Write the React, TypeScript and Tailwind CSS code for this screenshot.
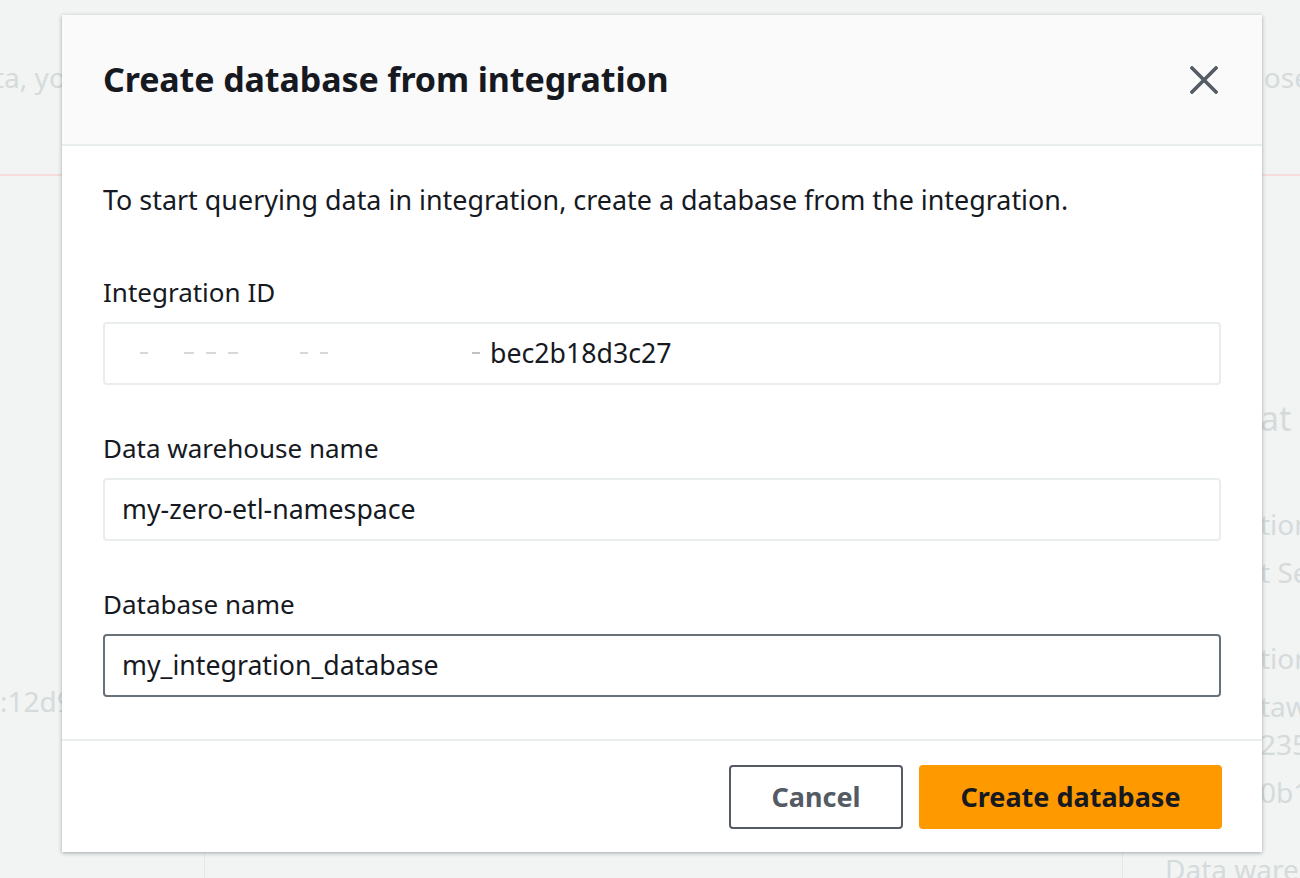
const font = { fontFamily: '"Noto Sans", "Open Sans", Arial, sans-serif' }

function Field({ label, value, editable }: { label: string; value: React.ReactNode; editable?: boolean }) {
  return (
    <div className="flex flex-col">
      <label className="text-[26px] leading-[30px] text-[#16191f]">{label}</label>
      <div
        className={
          editable
            ? 'mt-[15px] h-[63px] rounded-[4px] border-2 border-[#687078] bg-white px-[17px] flex items-center text-[26.7px] text-[#16191f]'
            : 'mt-[15px] h-[63px] rounded-[4px] border-2 border-[#eaeded] bg-white px-[17px] flex items-center text-[26.7px] text-[#16191f]'
        }
      >
        {value}
      </div>
    </div>
  )
}

function Background() {
  return (
    <div className="relative h-[878px] w-full overflow-hidden bg-[#f2f3f3] text-[#d5dbdb] whitespace-nowrap" style={font}>
      <div className="flex justify-between pt-[56px] text-[28px]">
        <span className="-ml-[6px]">ta, yo</span>
        <span className="mr-[-10px]">ose</span>
      </div>
      <div className="mt-[76px] border-t-2 border-[#f6dcdc]" />
      <div className="flex justify-between">
        <div className="mt-[504px] text-[28px]">:12d9</div>
        <div className="flex flex-col pt-[218px] text-[28px] leading-[48px] ml-auto w-[40px]">
          <span className="text-[34px]">at</span>
          <span className="mt-[58px]">tion</span>
          <span>t Se</span>
          <span className="mt-[38px]">tion</span>
          <span>taw</span>
          <span className="-mt-[10px]">235</span>
          <span>0b1</span>
        </div>
      </div>
      <div className="absolute bottom-[-12px] left-[1165px] text-[28px]">Data wareh</div>
      <div className="absolute bottom-0 left-[204px] h-[26px] border-l border-[#e4e7e7]" />
      <div className="absolute bottom-0 left-[1122px] h-[26px] border-l border-[#e4e7e7]" />
    </div>
  )
}

export default function App() {
  return (
    <div className="relative h-[878px] w-[1300px] overflow-hidden" style={font}>
      <Background />
      <div className="absolute left-[62px] top-[15px] w-[1200px] h-[837px] bg-white flex flex-col shadow-[0_1px_4px_rgba(0,28,36,0.35)]">
        <div className="h-[131px] bg-[#fafafa] border-b-2 border-[#eaeded] flex items-center justify-between pl-[41px] pr-[44px]">
          <h1 className="text-[34px] font-bold text-[#16191f] tracking-[-0.1px]">Create database from integration</h1>
          <svg width="28" height="28" viewBox="0 0 28 28" className="text-[#545b64]">
            <path d="M2 2 L26 26 M26 2 L2 26" stroke="currentColor" strokeWidth="3.6" strokeLinecap="square" fill="none" />
          </svg>
        </div>
        <div className="px-[41px] pt-[38px] flex flex-col">
          <p className="text-[26.9px] leading-[32px] text-[#16191f] whitespace-nowrap">
            To start querying data in integration, create a database from the integration.
          </p>
          <div className="mt-[61px] flex flex-col gap-[48px]">
            <Field
              label="Integration ID"
              value={
                <span className="flex items-center">
                  <span className="flex items-center gap-[12px] w-[368px]">
                    <span className="ml-[18px] h-[2px] w-[8px] bg-[#d6d9dc]" />
                    <span className="ml-[24px] h-[2px] w-[10px] bg-[#d6d9dc]" />
                    <span className="h-[2px] w-[10px] bg-[#d6d9dc]" />
                    <span className="h-[2px] w-[10px] bg-[#d6d9dc]" />
                    <span className="ml-[50px] h-[2px] w-[8px] bg-[#d6d9dc]" />
                    <span className="h-[2px] w-[8px] bg-[#d6d9dc]" />
                    <span className="ml-[132px] h-[2px] w-[8px] bg-[#bfc3c6]" />
                  </span>
                  <span>bec2b18d3c27</span>
                </span>
              }
            />
            <Field label="Data warehouse name" value="my-zero-etl-namespace" />
            <Field label="Database name" value="my_integration_database" editable />
          </div>
        </div>
        <div className="mt-[42px] border-t-2 border-[#eaeded] flex justify-end gap-[16px] pr-[40px] pt-[24px]">
          <button className="h-[64px] w-[174px] rounded-[4px] border-2 border-[#545b64] bg-white text-[27px] font-bold text-[#545b64]">
            Cancel
          </button>
          <button className="h-[64px] w-[303px] rounded-[4px] bg-[#ff9900] text-[27px] font-bold text-[#16191f]">
            Create database
          </button>
        </div>
      </div>
    </div>
  )
}
